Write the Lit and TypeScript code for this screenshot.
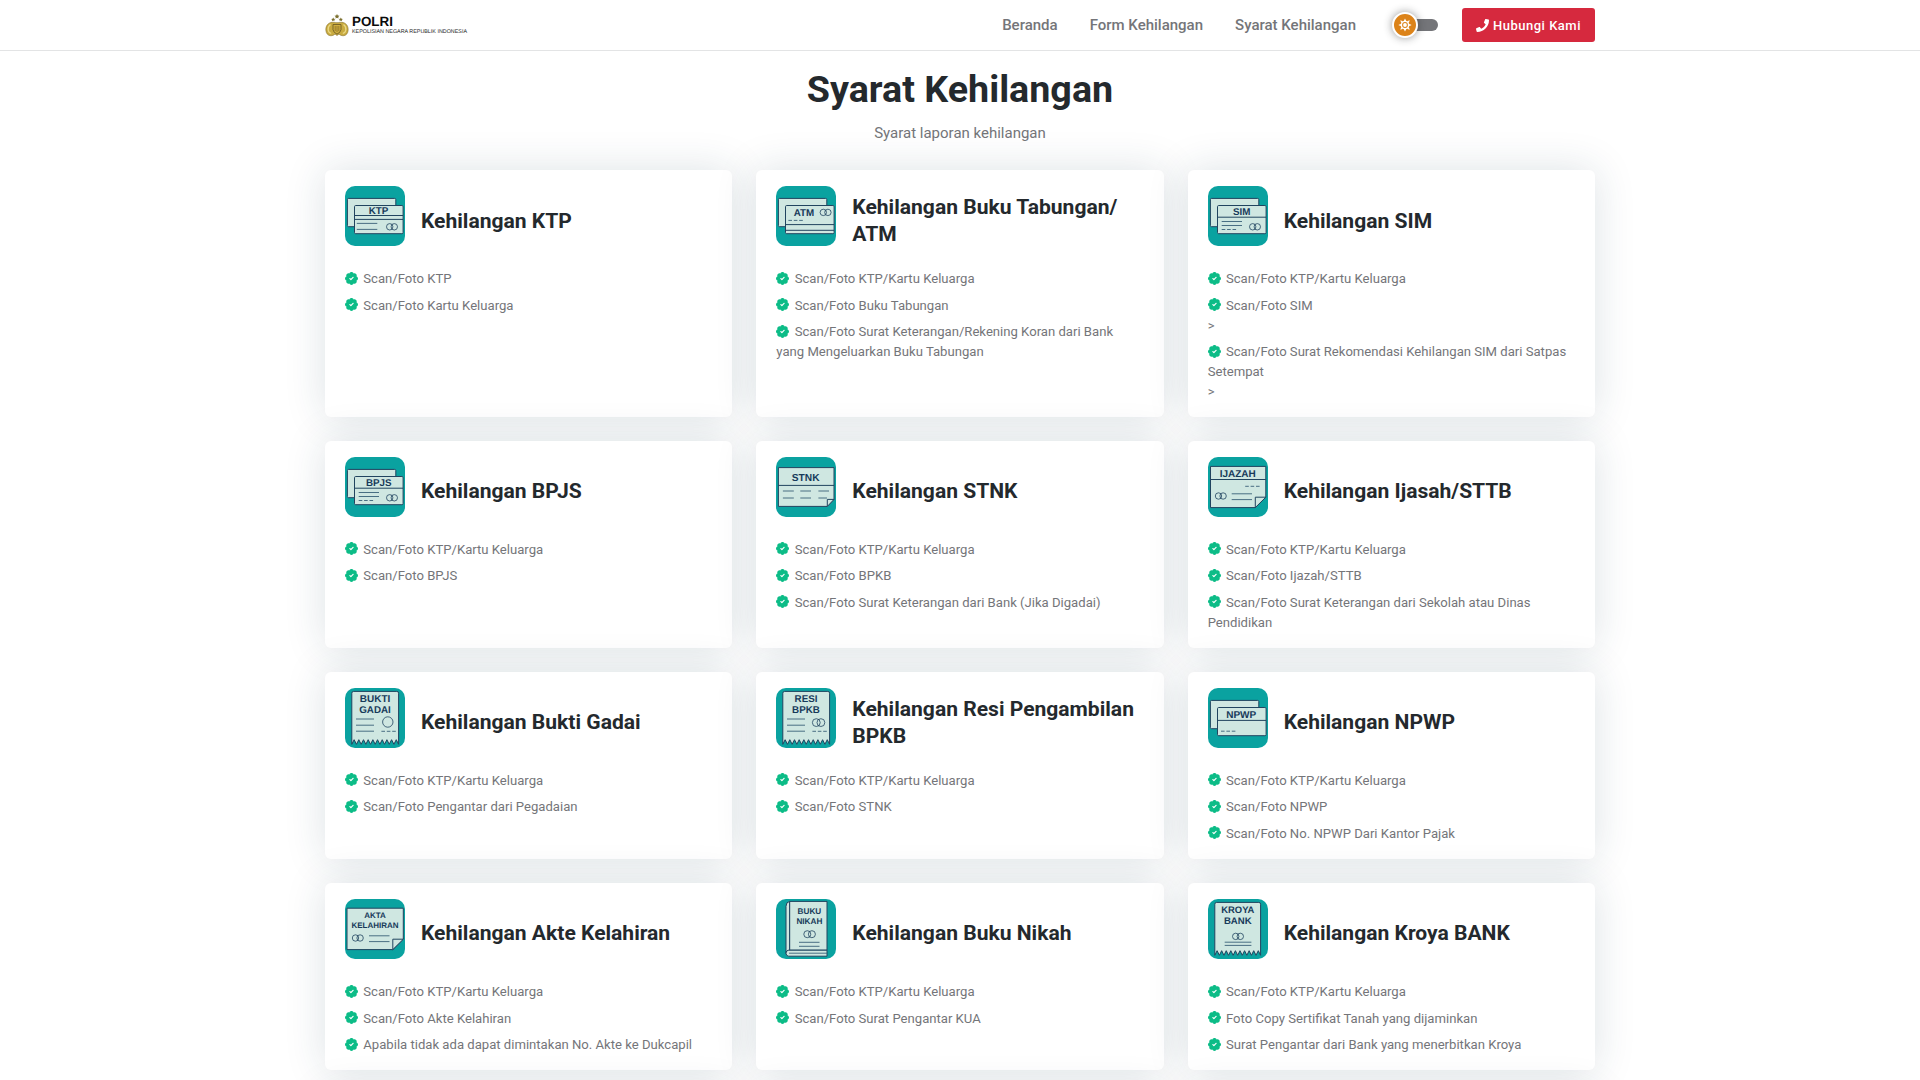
import { LitElement, html, css, svg, TemplateResult } from "lit";
import { customElement, property } from "lit/decorators.js";

type Art = TemplateResult;

/* ---- small drawing helpers for the 60x60 document tiles ---- */
const label = (x: number, y: number, s: string, size = 9.8) =>
  svg`<text class="label" x=${x} y=${y} font-size=${size}>${s}</text>`;
const line = (x1: number, x2: number, y: number) =>
  svg`<path class="thin" d=${`M${x1} ${y}H${x2}`}/>`;
const dash = (x: number, y: number) =>
  svg`<path class="thin" d=${`M${x} ${y}h3.6m1.8 0h3.6m1.8 0h3.6`}/>`;
const rings = (x: number, y: number, r = 3.2) =>
  svg`<circle class="ring" cx=${x - 2.3} cy=${y} r=${r}/><circle class="ring" cx=${x + 2.3} cy=${y} r=${r}/>`;
const cards = (inner: Art) => svg`
  <rect class="paper" x="2.4" y="12.4" width="48.4" height="28.3" rx="1.2"/>
  <rect class="paper" x="9.5" y="19.5" width="48.6" height="28.2" rx="1.2"/>${inner}`;
const full = (x1: number, x2: number, y: number) =>
  svg`<path class="rule" d=${`M${x1} ${y}H${x2}`}/>`;
const receipt = (x1: number, x2: number, inner: Art) => {
  const n = 10;
  const step = (x2 - x1) / n;
  let d = `M${x1} 56.3V5.2q0-1.8 1.8-1.8H${x2 - 1.8}q1.8 0 1.8 1.8V56.3`;
  for (let i = 0; i < n; i++) d += `l${-step / 2} -4.6l${-step / 2} 4.6`;
  return svg`<path class="paper" d=${d + "z"}/>${inner}`;
};
const folded = (x1: number, y1: number, x2: number, y2: number, fw: number, fh: number, inner: Art) => svg`
  <path class="paper" d=${`M${x1} ${y1}H${x2}V${y2 - fh}L${x2 - fw} ${y2}H${x1}z`}/>
  <path class="paper" d=${`M${x2 - fw} ${y2}V${y2 - fh}H${x2}z`}/>${inner}`;

const ART: Record<string, Art> = {
  ktp: cards(svg`${label(33.5, 27.6, "KTP")}${full(9.5, 58, 29.5)}${full(9.5, 58, 33.4)}${line(11.8, 32.3, 37.4)}${line(11.8, 32.3, 43.4)}${rings(47, 40.8)}`),
  atm: cards(svg`${label(28, 30, "ATM")}${rings(49.6, 26.4)}${dash(12.4, 34.4)}${full(9.5, 58, 38.6)}${full(9.5, 58, 44.3)}`),
  sim: cards(svg`${label(33.7, 29, "SIM")}${full(9.5, 58, 31.2)}${line(13.7, 34, 35.5)}${line(13.7, 34, 39.5)}${dash(13.7, 43.5)}${rings(47, 40.8)}`),
  bpjs: cards(svg`${label(33.7, 28.8, "BPJS")}${full(9.5, 58, 31.2)}${line(13.7, 34, 35.5)}${line(13.7, 34, 39.5)}${dash(13.7, 43.5)}${rings(47, 40.8)}`),
  npwp: cards(svg`${label(33.2, 30.2, "NPWP", 10)}${full(9.5, 58, 32.4)}${dash(13, 43.2)}`),
  stnk: folded(2.4, 10.6, 58, 49.4, 6.7, 7, svg`${full(2.4, 58, 28.4)}${label(29.7, 23.7, "STNK", 10.2)}
    ${[34, 41].map((y) => [line(6.9, 17.8, y), line(24.3, 35, y), y === 34 ? line(42.4, 53, y) : line(42.4, 51, y)])}`),
  ijazah: folded(2.5, 9.4, 57.8, 50.6, 10.5, 10.4, svg`${full(2.5, 57.8, 22.5)}${label(29.7, 20, "IJAZAH", 10)}${dash(37.2, 29.3)}${rings(12.8, 39)}${line(23.7, 44, 36.8)}${line(23.7, 44, 42.6)}`),
  akta: folded(2, 9.2, 58.3, 50.6, 10.5, 10.4, svg`${label(30, 19.3, "AKTA", 8)}${label(30, 28.5, "KELAHIRAN", 8)}${rings(12.8, 39)}${line(24, 44.5, 36.8)}${line(24, 44.5, 42.6)}`),
  gadai: receipt(6.8, 53.6, svg`${label(30, 14.3, "BUKTI", 10)}${label(30, 25.3, "GADAI", 9.8)}${line(11, 29, 31)}${line(11, 29, 37.2)}${line(11, 29, 43.2)}<circle class="ring" cx="42.8" cy="34" r="5.2"/>${dash(36.4, 43.3)}`),
  resi: receipt(6.8, 53.6, svg`${label(30, 14.3, "RESI", 9.8)}${label(30, 25.3, "BPKB", 9.8)}${line(11, 29, 31)}${line(11, 29, 37.2)}${line(11, 29, 43.2)}${rings(42.6, 34.6, 3.9)}${dash(36.4, 43.3)}`),
  kroya: receipt(6.8, 52.6, svg`${label(29.8, 14, "KROYA", 9.4)}${label(29.8, 25.4, "BANK", 9.6)}${rings(30, 37.4)}${line(16.7, 43.4, 43.2)}${line(16.7, 43.4, 46.4)}`),
  nikah: svg`
    <path class="paper" d="M13.6 2.4H51V51.2H13.6z"/>
    <path class="paper" d="M13.6 2.4q-3.6.6-3.6 5V54.5q.2-3.2 3.6-3.3z"/>
    <path class="paper" d="M51 51.2H12.6q-2.6.2-2.6 3t2.6 3H51z"/><path class="thin" d="M13 54.2H51"/>
    ${label(33.4, 14.8, "BUKU", 8.2)}${label(33.4, 24.6, "NIKAH", 8.2)}${rings(33.6, 35.2, 3.5)}${line(23, 43.5, 43.3)}${line(23, 43.5, 47.3)}`,
};

interface Requirement {
  art: string;
  title: string;
  items: string[];
}

const BASE = "Scan/Foto KTP/Kartu Keluarga";
const DATA: Requirement[] = [
  { art: "ktp", title: "Kehilangan KTP", items: ["Scan/Foto KTP", "Scan/Foto Kartu Keluarga"] },
  { art: "atm", title: "Kehilangan Buku Tabungan/\nATM", items: [BASE, "Scan/Foto Buku Tabungan", "Scan/Foto Surat Keterangan/Rekening Koran dari Bank yang Mengeluarkan Buku Tabungan"] },
  { art: "sim", title: "Kehilangan SIM", items: [BASE, "Scan/Foto SIM\n>", "Scan/Foto Surat Rekomendasi Kehilangan SIM dari Satpas Setempat\n>"] },
  { art: "bpjs", title: "Kehilangan BPJS", items: [BASE, "Scan/Foto BPJS"] },
  { art: "stnk", title: "Kehilangan STNK", items: [BASE, "Scan/Foto BPKB", "Scan/Foto Surat Keterangan dari Bank (Jika Digadai)"] },
  { art: "ijazah", title: "Kehilangan Ijasah/STTB", items: [BASE, "Scan/Foto Ijazah/STTB", "Scan/Foto Surat Keterangan dari Sekolah atau Dinas Pendidikan"] },
  { art: "gadai", title: "Kehilangan Bukti Gadai", items: [BASE, "Scan/Foto Pengantar dari Pegadaian"] },
  { art: "resi", title: "Kehilangan Resi Pengambilan BPKB", items: [BASE, "Scan/Foto STNK"] },
  { art: "npwp", title: "Kehilangan NPWP", items: [BASE, "Scan/Foto NPWP", "Scan/Foto No. NPWP Dari Kantor Pajak"] },
  { art: "akta", title: "Kehilangan Akte Kelahiran", items: [BASE, "Scan/Foto Akte Kelahiran", "Apabila tidak ada dapat dimintakan No. Akte ke Dukcapil"] },
  { art: "nikah", title: "Kehilangan Buku Nikah", items: [BASE, "Scan/Foto Surat Pengantar KUA"] },
  { art: "kroya", title: "Kehilangan Kroya BANK", items: [BASE, "Foto Copy Sertifikat Tanah yang dijaminkan", "Surat Pengantar dari Bank yang menerbitkan Kroya"] },
];

@customElement("requirement-card")
export class RequirementCard extends LitElement {
  @property({ attribute: false }) data?: Requirement;

  static styles = css`
    :host {
      display: block;
      box-sizing: border-box;
      padding: 16px 20px 15.4px;
      background: #fff;
      border-radius: 6px;
      box-shadow: 0 0 40px rgba(29, 58, 83, 0.15);
    }
    .head { display: flex; align-items: center; gap: 16px; height: 68px; margin-bottom: 15.1px; }
    .tile { flex: none; align-self: flex-start; width: 60px; height: 60px; display: block; }
    .bg { fill: #0aa2a0; }
    .paper { fill: #cfe7e1; stroke: #21445f; stroke-width: 1; stroke-linejoin: round; }
    .rule { fill: none; stroke: #21445f; stroke-width: 1; }
    .thin { fill: none; stroke: #3a6178; stroke-width: 0.9; }
    .ring { fill: none; stroke: #21445f; stroke-width: 0.8; }
    .label { font-family: "Liberation Sans", Arial, sans-serif; font-weight: 700; fill: #173a5a; text-anchor: middle; text-rendering: geometricPrecision; }
    h5 { margin: 0; font-size: 21.07px; line-height: 27px; font-weight: 700; color: #24292d; white-space: pre-line; }
    ul { list-style: none; margin: 0; padding: 0; display: flex; flex-direction: column; gap: 6.9px; }
    li { font-size: 13.125px; line-height: 19.69px; color: #747579; white-space: pre-line; }
    .check { width: 13px; height: 13px; margin-right: 5.3px; vertical-align: -1.6px; }
  `;

  render() {
    if (!this.data) return html``;
    const { art, title, items } = this.data;
    return html`
      <div class="head">
        <svg class="tile" viewBox="0 0 60 60"><rect class="bg" width="60" height="60" rx="10"/>${ART[art]}</svg>
        <h5>${title}</h5>
      </div>
      <ul>
        ${items.map((t) => html`<li><svg class="check" viewBox="0 0 512 512"><path fill="#0cbc87" d="M512 256c0-37.700-23.700-69.900-57.100-82.400 14.700-32.400 8.800-71.900-17.900-98.600-26.700-26.700-66.200-32.600-98.600-17.900C325.900 23.700 293.700 0 256 0s-69.900 23.700-82.400 57.100c-32.400-14.700-72-8.800-98.600 17.900-26.700 26.700-32.600 66.200-17.900 98.600C23.700 186.100 0 218.300 0 256s23.700 69.900 57.100 82.400c-14.700 32.400-8.800 72 17.900 98.600 26.600 26.600 66.100 32.700 98.600 17.900 12.500 33.300 44.700 57.100 82.400 57.100s69.900-23.700 82.400-57.100c32.600 14.800 72 8.700 98.600-17.900 26.700-26.700 32.600-66.200 17.900-98.600 33.400-12.500 57.100-44.700 57.100-82.400z"/><path fill="#fff" d="M367.700 211.600l-133 132c-4.700 4.700-12.300 4.600-17-.1l-73.600-74.200c-4.700-4.700-4.600-12.300.1-17l22.700-22.500c4.700-4.700 12.300-4.600 17 .1l42.500 42.800 101.500-100.700c4.700-4.700 12.300-4.600 17 .1l22.500 22.700c4.700 4.700 4.700 12.200.3 16.800z" transform="translate(56 56) scale(.78)"/></svg>${t}</li>`)}
      </ul>
    `;
  }
}

@customElement("app-root")
export class AppRoot extends LitElement {
  static styles = css`
    :host {
      display: block;
      height: 100vh;
      overflow: hidden;
      background: #fff;
      color: #747579;
      font-family: Roboto, "Liberation Sans", sans-serif;
    }
    header { height: 50px; border-bottom: 1px solid #e3e4e5; }
    .wrap { width: 1270px; margin: 0 auto; }
    .bar { height: 50px; display: flex; align-items: center; }
    .logo { display: flex; align-items: center; gap: 3px; margin-right: auto; }
    .emblem { width: 24px; height: 30px; display: block; }
    .brand { display: flex; flex-direction: column; gap: 0.7px; padding-top: 1px; color: #0b0b0b; white-space: nowrap;
      font-family: "Liberation Sans", Arial, sans-serif; text-rendering: geometricPrecision; }
    .brand b { font-size: 13.4px; line-height: 14px; }
    .brand span { font-size: 5.38px; line-height: 7px; color: #1c1c1c; }
    nav { display: flex; gap: 32px; font-size: 15px; line-height: 22px; font-weight: 500; }
    .switch { display: flex; align-items: center; width: 46px; height: 26px; margin: 0 24px 0 36px; }
    .knob { flex: none; box-sizing: border-box; width: 26px; height: 26px; border: 2px solid #fff; border-radius: 50%;
      background: #dc8319; box-shadow: 0 0 8px rgba(29, 30, 33, 0.45); display: flex; align-items: center; justify-content: center; z-index: 1; }
    .knob svg { width: 14px; height: 14px; }
    .track { width: 30px; height: 12px; margin-left: -10px; border-radius: 6px; background: #747579; }
    .call { box-sizing: border-box; width: 133px; height: 34px; border-radius: 3px; background: #d6293e; color: #fff;
      display: flex; align-items: center; justify-content: center; gap: 4px; font-size: 13px; font-weight: 500; letter-spacing: 0.5px; white-space: nowrap; }
    .call svg { width: 13px; height: 13px; }
    .intro { text-align: center; padding-top: 14px; height: 105.2px; }
    h1 { margin: 0; font-size: 37.66px; line-height: 48px; font-weight: 700; color: #24292d; }
    .intro p { margin: 8.5px 0 0; font-size: 15px; line-height: 22.5px; }
    .grid { display: grid; grid-template-columns: repeat(3, 1fr); gap: 24px; }
  `;

  render() {
    return html`
      <header>
        <div class="wrap bar">
          <div class="logo">
            <svg class="emblem" viewBox="0 0 24 30">
              <g fill="#7c702f">
                <path d="M12 4l.8 1.500 1.700.2-1.300 1.200.4 1.600-1.600-.8-1.600.8.4-1.600-1.300-1.200 1.700-.2z"/>
                <path d="M8.200 7.500l.7 1.300 1.400.1-1.100 1 .4 1.400-1.400-.7-1.300.7.300-1.400-1-1 1.400-.1z"/>
                <path d="M15.800 7.500l.7 1.300 1.400.1-1.100 1 .4 1.400-1.400-.7-1.300.7.300-1.400-1-1 1.400-.1z"/>
              </g>
              <path d="M6 12.500C2 13.500.6 17 .9 20.500c.3 3 2 5 4.600 5.200 2 .1 3.500-.6 4.500-1.700l2 1.500 2-1.500c1 1.100 2.500 1.800 4.500 1.700 2.600-.2 4.300-2.200 4.600-5.200.3-3.500-1.100-7-5.100-8-2.300-.6-4 .2-6 .2s-3.700-.8-6-.2z" fill="#c9ab40" stroke="#87712c" stroke-width=".6"/>
              <path d="M5.500 14.500c-2 1.400-2.600 3.500-2.300 5.500.3 1.900 1.400 3.200 3 3.400M18.500 14.500c2 1.400 2.600 3.500 2.300 5.500-.3 1.900-1.400 3.200-3 3.400" fill="none" stroke="#ead884" stroke-width="1.300"/>
              <path d="M8 14.500h8v5.200q-.6 3-4 4.400-3.400-1.400-4-4.400z" fill="#cfae3f" stroke="#665622" stroke-width=".8"/>
              <path d="M10.200 16v5m1.800-5v6m1.800-6v5" stroke="#8c722a" stroke-width=".8"/>
            </svg>
            <div class="brand"><b>POLRI</b><span>KEPOLISIAN NEGARA REPUBLIK INDONESIA</span></div>
          </div>
          <nav><span>Beranda</span><span>Form Kehilangan</span><span>Syarat Kehilangan</span></nav>
          <div class="switch">
            <span class="knob">
              <svg viewBox="0 0 14 14" fill="none" stroke="#fff">
                <circle cx="7" cy="7" r="1.900" fill="#fff" stroke="none"/>
                <circle cx="7" cy="7" r="3.600" stroke-width="1.400"/>
                <path fill="#fff" stroke="none" d="M7 .4l1.300 2.500H5.700zM7 13.600l1.300-2.500H5.700zM.4 7l2.500-1.300v2.600zM13.600 7l-2.500-1.300v2.600zM2.300 2.300l2.800.9-1.900 1.900zM11.700 2.300l-2.800.9 1.900 1.900zM2.300 11.700l2.800-.9-1.900-1.900zM11.700 11.700l-2.800-.9 1.900-1.900z"/>
              </svg>
            </span>
            <span class="track"></span>
          </div>
          <div class="call">
            <svg viewBox="0 0 512 512"><path fill="#fff" d="M493.400 24.600l-104-24c-11.300-2.600-22.900 3.300-27.500 13.900l-48 112c-4.200 9.800-1.400 21.300 6.900 28l60.600 49.600c-36 76.700-98.900 140.500-177.200 177.200l-49.600-60.600c-6.800-8.300-18.200-11.100-28-6.900l-112 48C3.900 366.500-2 378.100.6 389.400l24 104C27.100 504.200 36.700 512 48 512c256.100 0 464-207.500 464-464 0-11.200-7.700-20.900-18.600-23.400z"/></svg>
            <span>Hubungi Kami</span>
          </div>
        </div>
      </header>
      <main class="wrap">
        <div class="intro">
          <h1>Syarat Kehilangan</h1>
          <p>Syarat laporan kehilangan</p>
        </div>
        <div class="grid">
          ${DATA.map((d) => html`<requirement-card .data=${d}></requirement-card>`)}
          ${[0, 1, 2].map(() => html`<requirement-card></requirement-card>`)}
        </div>
      </main>
    `;
  }
}
